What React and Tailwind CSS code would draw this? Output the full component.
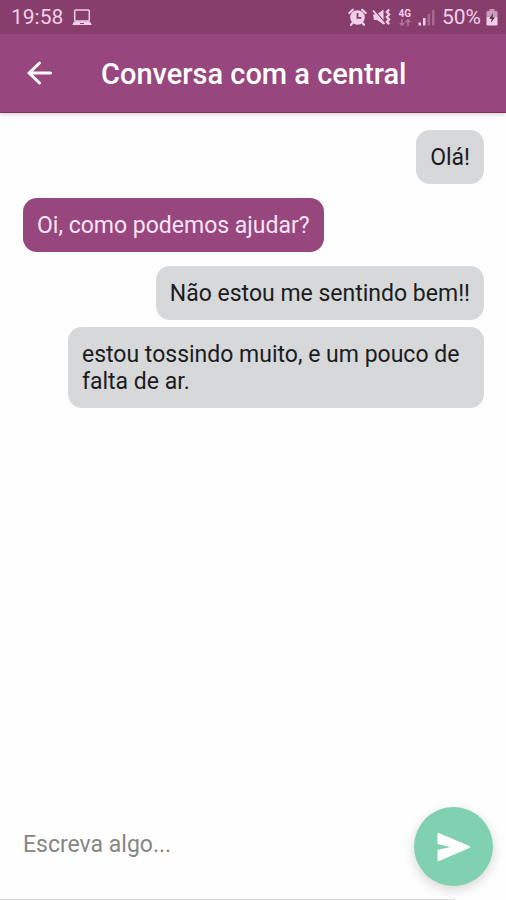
import React from "react";

const messages = [
  { id: 1, mine: true, text: "Olá!", space: "mt-0" },
  { id: 2, mine: false, text: "Oi, como podemos ajudar?", space: "mt-[14px]" },
  { id: 3, mine: true, text: "Não estou me sentindo bem!!", space: "mt-[14px]" },
  { id: 4, mine: true, text: "estou tossindo muito, e um pouco de falta de ar.", space: "mt-[7px]" },
];

function LaptopIcon() {
  return (
    <svg viewBox="0 0 20 17" className="h-[17px] w-5" fill="none" aria-hidden="true">
      <rect x="2.7" y="1" width="14.6" height="11" rx="1" stroke="currentColor" strokeWidth="1.5" />
      <path d="M2 12.500h16l1.800 3.500H.2z" fill="currentColor" />
      <path d="M8 14.500h4" stroke="#873e6c" strokeWidth="1" />
    </svg>
  );
}

function AlarmIcon() {
  return (
    <svg viewBox="0 0 19 18" className="h-[18px] w-[19px]" fill="none" aria-hidden="true">
      <circle cx="9.5" cy="9.5" r="7.300" fill="currentColor" />
      <path d="M1.300 5 4.800 1.700M17.700 5 14.200 1.700M4.800 14.600 3 16.800M14.200 14.600l1.800 2.200" stroke="currentColor" strokeWidth="2.200" strokeLinecap="round" />
      <path d="M9.500 5v4.800h3.800" stroke="#873e6c" strokeWidth="1.800" />
    </svg>
  );
}

function VibrateMuteIcon() {
  return (
    <svg viewBox="0 0 19 18" className="h-[18px] w-[19px]" fill="none" aria-hidden="true">
      <path d="M1 6.500h3.500L11.500 1.500v15L5 12H2z" fill="currentColor" />
      <path d="M3.500 3.500 12 13.500" stroke="#873e6c" strokeWidth="1.200" />
      <path d="M1 2.500 12.500 16" stroke="currentColor" strokeWidth="1.800" />
      <path d="m17.200 1.500-2.400 2.400 2.400 2.500-2.400 2.500 2.400 2.500-2.400 2.500 2.400 2.400" stroke="currentColor" strokeWidth="2.200" />
    </svg>
  );
}

function DataArrowsIcon() {
  return (
    <svg viewBox="0 0 12 7" className="h-[7px] w-3 opacity-40" fill="none" stroke="currentColor" strokeWidth="1.500" aria-hidden="true">
      <path d="M3 0v6M.8 4 3 6.200 5.200 4M9 7V1M6.800 3 9 .8 11.200 3" />
    </svg>
  );
}

function SignalIcon() {
  return (
    <svg viewBox="0 0 17 17" className="h-[17px] w-[17px]" fill="currentColor" aria-hidden="true">
      <rect x="0.500" y="13.500" width="2.500" height="3" />
      <rect x="5" y="9" width="2.500" height="7.500" />
      <rect x="9.500" y="5" width="2.500" height="11.500" opacity="0.3" />
      <rect x="14" y="1" width="2.500" height="15.500" opacity="0.3" />
    </svg>
  );
}

function BatteryIcon() {
  return (
    <svg viewBox="0 0 12 18" className="h-[18px] w-3" aria-hidden="true">
      <path d="M3.500 1h5v2h2a1 1 0 0 1 1 1v5H.5V4a1 1 0 0 1 1-1h2z" fill="currentColor" opacity="0.65" />
      <path d="M.5 9h11v7.500a1 1 0 0 1-1 1h-9a1 1 0 0 1-1-1z" fill="currentColor" />
      <path d="M7 5 3.200 10.800h2.500L5 14.800l4-5.600H6.500z" fill="#5f2a4c" />
    </svg>
  );
}

function StatusBar() {
  return (
    <div className="flex h-[34px] items-center justify-between bg-[#873e6c] pl-[11px] pr-2 text-[#f0cfe8]">
      <div className="flex items-center gap-[9px]">
        <span className="text-[21px] leading-6">19:58</span>
        <LaptopIcon />
      </div>
      <div className="flex items-center">
        <AlarmIcon />
        <span className="ml-[5px]">
          <VibrateMuteIcon />
        </span>
        <span className="ml-[7px] flex flex-col items-center">
          <span className="text-[10px] font-bold leading-[10px]">4G</span>
          <DataArrowsIcon />
        </span>
        <span className="ml-[7px]">
          <SignalIcon />
        </span>
        <span className="ml-[7px] text-[21px] leading-6">50%</span>
        <span className="ml-[5px]">
          <BatteryIcon />
        </span>
      </div>
    </div>
  );
}

function Header() {
  return (
    <header className="z-10 shadow-[0_1px_5px_rgba(60,50,20,0.25)]">
      <StatusBar />
      <div className="flex h-[79px] items-center border-b border-[#7f2f64] bg-[#97467e] text-white">
        <button type="button" aria-label="Voltar" className="ml-[21px] flex h-9 w-9 items-center justify-center">
          <svg viewBox="0 0 36 36" className="h-9 w-9" fill="none" stroke="currentColor" strokeWidth="3" strokeLinecap="round" aria-hidden="true">
            <path d="M29.500 18H8.500M18.500 8 8.200 18l10.300 10" />
          </svg>
        </button>
        <h1 className="ml-[44px] pt-px text-[29px] font-medium leading-8">Conversa com a central</h1>
      </div>
    </header>
  );
}

function Message({ mine, text, space }) {
  const side = mine ? "self-end bg-[#d6d8d9] text-[#1c1c1e]" : "self-start bg-[#97467e] text-[#fbe4f5]";
  return (
    <li className={`${space} ${side} max-w-[416px] rounded-[14px] px-[14px] pb-[13px] pt-[14px] text-[23px] leading-[27px]`}>
      {text}
    </li>
  );
}

function Composer() {
  return (
    <form className="flex items-end justify-between" onSubmit={(e) => e.preventDefault()}>
      <div className="min-w-0 flex-1">
        <input
          type="text"
          aria-label="Mensagem"
          placeholder="Escreva algo..."
          className="block h-[111px] w-full border-b border-[#dcdcdc] bg-transparent pl-[23px] text-[23px] text-[#1c1c1e] outline-none placeholder:text-[#868686]"
        />
      </div>
      <button
        type="submit"
        aria-label="Enviar"
        className="-ml-[41px] mb-[14px] mr-[13px] flex h-[79px] w-[79px] shrink-0 items-center justify-center rounded-full bg-[#80d1b0] text-white shadow-[0_4px_12px_rgba(0,0,0,0.16)]"
      >
        <svg viewBox="0 0 34 30" className="h-[30px] w-[34px]" fill="currentColor" stroke="currentColor" strokeWidth="2" strokeLinejoin="round" aria-hidden="true">
          <path d="M1.500 2 32 15 1.500 28V18.800L18 15 1.500 11.200z" />
        </svg>
      </button>
    </form>
  );
}

export default function App() {
  return (
    <div className="flex min-h-screen flex-col bg-[#fefefe] font-[Roboto,'Liberation_Sans',sans-serif]">
      <Header />
      <main className="flex flex-1 flex-col">
        <ul className="flex flex-1 flex-col pl-[23px] pr-[22px] pt-[17px]">
          {messages.map((m) => (
            <Message key={m.id} mine={m.mine} text={m.text} space={m.space} />
          ))}
        </ul>
        <Composer />
      </main>
    </div>
  );
}
